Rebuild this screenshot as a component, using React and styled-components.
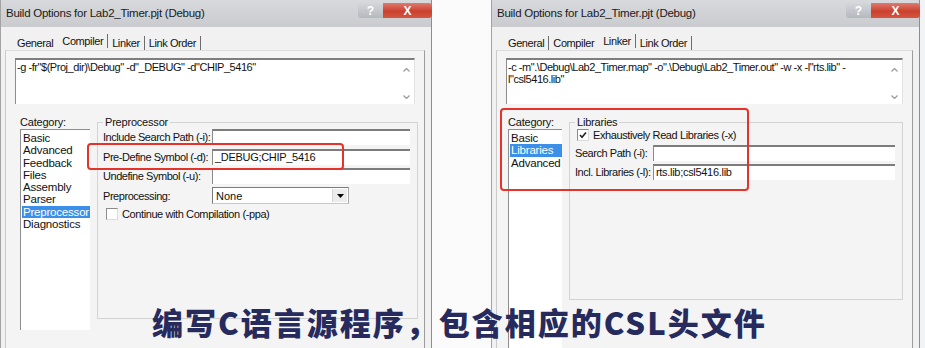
import React from 'react';
import styled, { createGlobalStyle } from 'styled-components';

const GlobalStyle = createGlobalStyle`
  html, body {
    margin: 0;
    padding: 0;
    background: #f5f6f7;
  }
  body {
    font-family: "Liberation Sans", Arial, sans-serif;
    color: #111;
  }
`;

const Screen = styled.div`
  position: relative;
  width: 925px;
  height: 348px;
  overflow: hidden;
  display: flex;
  align-items: flex-start;
  gap: 59px;
  background: linear-gradient(90deg, #f2f3f4, #fbfbfb 50%, #f2f3f4);
`;

const Window = styled.div`
  width: ${p => p.$width}px;
  height: 370px;
  flex-shrink: 0;
  box-sizing: border-box;
  display: flex;
  flex-direction: column;
  background: #e4e5e8;
  border-left: 1px solid #a3a3a3;
  border-right: 1px solid #8e8e8e;
`;

const TitleBar = styled.div`
  height: 27px;
  flex-shrink: 0;
  display: flex;
  justify-content: space-between;
  align-items: flex-start;
  padding-left: 5px;
  background: linear-gradient(#d7d9dc, #c9cbcf);
`;

const Title = styled.div`
  font-size: 11.5px;
  line-height: 27px;
  letter-spacing: -0.25px;
  color: #1a1a1a;
`;

const Controls = styled.div`
  display: flex;
  margin-top: 3px;
  margin-right: -1px;
`;

const CtrlButton = styled.div`
  width: ${p => (p.$close ? 49 : 25)}px;
  height: 15px;
  display: flex;
  align-items: center;
  justify-content: center;
  font-size: 12px;
  font-weight: bold;
  color: #fff;
  border-radius: ${p => (p.$close ? '0 3px 3px 0' : '3px 0 0 3px')};
  background: ${p => (p.$close
    ? 'linear-gradient(#e27a6e, #c9412f 55%, #d65540)'
    : 'linear-gradient(#d4d6da, #b5b8bd)')};
`;

const Client = styled.div`
  flex: 1;
  display: flex;
  flex-direction: column;
  padding: 0 6px 0 4px;
  background: #f1f1f1;
`;

const TabsRow = styled.div`
  height: 23px;
  display: flex;
  align-items: flex-end;
  padding-left: 8px;
`;

const Tab = styled.div`
  font-size: 11px;
  line-height: 14px;
  padding: 0 4px;
  margin-bottom: ${p => (p.$active ? 2 : 0)}px;
  border-right: 1px solid ${p => (p.$noSep ? 'transparent' : '#6d6d6d')};
  letter-spacing: -0.4px;
`;

const Panel = styled.div`
  flex: 1;
  padding: 7px 9px 0 9px;
  background: #f4f4f4;
  border-top: 1px solid #dcdcdc;
  border-left: 1px solid #cacaca;
  border-right: 1px solid #9d9d9d;
`;

const TextBox = styled.div`
  height: 46px;
  box-sizing: border-box;
  display: flex;
  background: #fff;
  border-top: 2px solid #7e7e7e;
  border-left: 1px solid #8d8d8d;
  border-right: 1px solid #e2e2e2;
`;

const Options = styled.div`
  flex: 1;
  padding: 1px 2px 0 1px;
  font-size: 11px;
  line-height: 12px;
  letter-spacing: -0.45px;
  white-space: pre;
`;

const ScrollBar = styled.div`
  width: 16px;
  display: flex;
  flex-direction: column;
  justify-content: space-between;
  align-items: center;
  padding: 8px 0 5px;
`;

const Chevron = ({ down }) => (
  <svg width="7" height="4" viewBox="0 0 7 4">
    <path d={down ? 'M0.5 0.5 L3.5 3.5 L6.5 0.5' : 'M0.5 3.5 L3.5 0.5 L6.5 3.5'}
      fill="none" stroke="#9a9a9a" strokeWidth="1.2" />
  </svg>
);

const CategoryRow = styled.div`
  display: flex;
  gap: 7px;
  margin-top: 12px;
  padding-left: ${p => p.$indent}px;
`;

const CategoryCol = styled.div`
  width: ${p => p.$width}px;
  flex-shrink: 0;
  display: flex;
  flex-direction: column;
`;

const Caption = styled.div`
  font-size: 11px;
  line-height: 12px;
  letter-spacing: -0.2px;
`;

const ListBox = styled.div`
  margin-top: 1px;
  height: ${p => p.$height}px;
  padding: 2px 0 0 1px;
  background: #fff;
  border-top: 1px solid #8e8e8e;
  border-left: 1px solid #8e8e8e;
`;

const ListItem = styled.div`
  font-size: 11.5px;
  line-height: 12.3px;
  padding-left: 1px;
  letter-spacing: -0.2px;
  color: ${p => (p.$selected ? '#fff' : '#111')};
  background: ${p => (p.$selected ? '#3b8fe8' : 'transparent')};
`;

const Group = styled.fieldset`
  width: ${p => p.$width}px;
  height: ${p => p.$height}px;
  box-sizing: border-box;
  flex-shrink: 0;
  margin: 0;
  padding: 0 7px 0 5px;
  border: 1px solid #d3d3d3;
  display: flex;
  flex-direction: column;
  gap: 3.5px;
`;

const Legend = styled.legend`
  padding: 0 2px;
  font-size: 11px;
  line-height: 12px;
  letter-spacing: -0.2px;
`;

const FieldRow = styled.div`
  height: 16px;
  display: flex;
  align-items: center;
  margin-top: ${p => p.$first ? 1 : 0}px;
`;

const Label = styled.div`
  width: ${p => p.$width}px;
  flex-shrink: 0;
  font-size: 11px;
  letter-spacing: -0.45px;
  white-space: nowrap;
`;

const Input = styled.div`
  flex: 1;
  height: 16px;
  box-sizing: border-box;
  padding-left: 2px;
  font-size: 11px;
  line-height: 13px;
  letter-spacing: -0.3px;
  background: #fff;
  border-top: 2px solid #7c7c7c;
  border-left: 1px solid #8a8a8a;
`;

const Select = styled.div`
  width: 137px;
  height: 17px;
  box-sizing: border-box;
  display: flex;
  align-items: center;
  justify-content: space-between;
  padding: 0 1px 0 3px;
  font-size: 11px;
  background: #fff;
  border: 1px solid #7c7c7c;
  border-right-color: #a9a9a9;
  border-bottom-color: #c8c8c8;
`;

const DropButton = styled.div`
  width: 14px;
  height: 13px;
  display: flex;
  align-items: center;
  justify-content: center;
  background: #ececec;
  border-left: 1px solid #d8d8d8;
`;

const CheckRow = styled.label`
  display: flex;
  align-items: center;
  gap: 4px;
  height: 13px;
  padding-left: ${p => p.$indent}px;
  font-size: 11px;
  letter-spacing: -0.4px;
  white-space: nowrap;
`;

const CheckBox = styled.span`
  width: 10px;
  height: 10px;
  flex-shrink: 0;
  display: flex;
  align-items: center;
  justify-content: center;
  background: #fff;
  border: 1px solid #8b8b8b;
  border-right-color: #dcdcdc;
  border-bottom-color: #dcdcdc;
`;

const Highlight = styled.div`
  position: absolute;
  left: ${p => p.$x}px;
  top: ${p => p.$y}px;
  width: ${p => p.$w}px;
  height: ${p => p.$h}px;
  box-sizing: border-box;
  border: 2px solid #e3332b;
  border-radius: 4px;
`;

const Subtitle = styled.div`
  position: absolute;
  left: 152px;
  top: 306px;
  font-family: "Noto Sans CJK SC", "Noto Sans", sans-serif;
  font-size: 31px;
  font-weight: 900;
  line-height: 1;
  letter-spacing: 2px;
  color: #262a5d;
  white-space: nowrap;
`;

const tabs = ['General', 'Compiler', 'Linker', 'Link Order'];

const Dialog = ({ width, active, options, children }) => {
  const activeIndex = tabs.indexOf(active);
  return (
    <Window $width={width}>
      <TitleBar>
        <Title>Build Options for Lab2_Timer.pjt (Debug)</Title>
        <Controls>
          <CtrlButton>?</CtrlButton>
          <CtrlButton $close>X</CtrlButton>
        </Controls>
      </TitleBar>
      <Client>
        <TabsRow>
          {tabs.map((t, i) => (
            <Tab key={t} $active={t === active} $noSep={i === activeIndex - 1}>{t}</Tab>
          ))}
        </TabsRow>
        <Panel>
          <TextBox>
            <Options>{options}</Options>
            <ScrollBar>
              <Chevron />
              <Chevron down />
            </ScrollBar>
          </TextBox>
          {children}
        </Panel>
      </Client>
    </Window>
  );
};

const Category = ({ width, height, items, selected }) => (
  <CategoryCol $width={width}>
    <Caption>Category:</Caption>
    <ListBox $height={height}>
      {items.map(i => (
        <ListItem key={i} $selected={i === selected}>{i}</ListItem>
      ))}
    </ListBox>
  </CategoryCol>
);

const Check = ({ checked, indent, children }) => (
  <CheckRow $indent={indent}>
    <CheckBox>
      {checked && (
        <svg width="8" height="8" viewBox="0 0 8 8">
          <path d="M1 4 L3 6.2 L7 1.5" fill="none" stroke="#222" strokeWidth="1.6" />
        </svg>
      )}
    </CheckBox>
    {children}
  </CheckRow>
);

export default function App() {
  return (
    <>
      <GlobalStyle />
      <Screen>
        <Dialog width={432} active="Compiler"
          options={'-g -fr"$(Proj_dir)\\Debug" -d"_DEBUG" -d"CHIP_5416"'}>
          <CategoryRow $indent={5}>
            <Category width={70} height={198} selected="Preprocessor"
              items={['Basic', 'Advanced', 'Feedback', 'Files', 'Assembly', 'Parser', 'Preprocessor', 'Diagnostics']} />
            <Group $width={321} $height={203}>
              <Legend>Preprocessor</Legend>
              <FieldRow $first>
                <Label $width={109}>Include Search Path (-i):</Label>
                <Input />
              </FieldRow>
              <FieldRow>
                <Label $width={109}>Pre-Define Symbol (-d):</Label>
                <Input>_DEBUG;CHIP_5416</Input>
              </FieldRow>
              <FieldRow>
                <Label $width={109}>Undefine Symbol (-u):</Label>
                <Input />
              </FieldRow>
              <FieldRow>
                <Label $width={109}>Preprocessing:</Label>
                <Select>
                  None
                  <DropButton>
                    <svg width="7" height="4" viewBox="0 0 7 4"><path d="M0 0 H7 L3.5 4 Z" fill="#000" /></svg>
                  </DropButton>
                </Select>
              </FieldRow>
              <Check indent={3}>Continue with Compilation (-ppa)</Check>
            </Group>
          </CategoryRow>
        </Dialog>

        <Dialog width={429} active="Linker"
          options={'-c -m".\\Debug\\Lab2_Timer.map" -o".\\Debug\\Lab2_Timer.out" -w -x -l"rts.lib" -\nl"csl5416.lib"'}>
          <CategoryRow $indent={2}>
            <Category width={54} height={240} selected="Libraries"
              items={['Basic', 'Libraries', 'Advanced']} />
            <Group $width={334} $height={184}>
              <Legend>Libraries</Legend>
              <Check checked indent={2}>Exhaustively Read Libraries (-x)</Check>
              <FieldRow>
                <Label $width={78}>Search Path (-i):</Label>
                <Input />
              </FieldRow>
              <FieldRow>
                <Label $width={78}>Incl. Libraries (-l):</Label>
                <Input>rts.lib;csl5416.lib</Input>
              </FieldRow>
            </Group>
          </CategoryRow>
        </Dialog>

        <Highlight $x={87} $y={143} $w={257} $h={27} />
        <Highlight $x={500} $y={108} $w={249} $h={83} />
        <Subtitle>编写C语言源程序，包含相应的CSL头文件</Subtitle>
      </Screen>
    </>
  );
}
